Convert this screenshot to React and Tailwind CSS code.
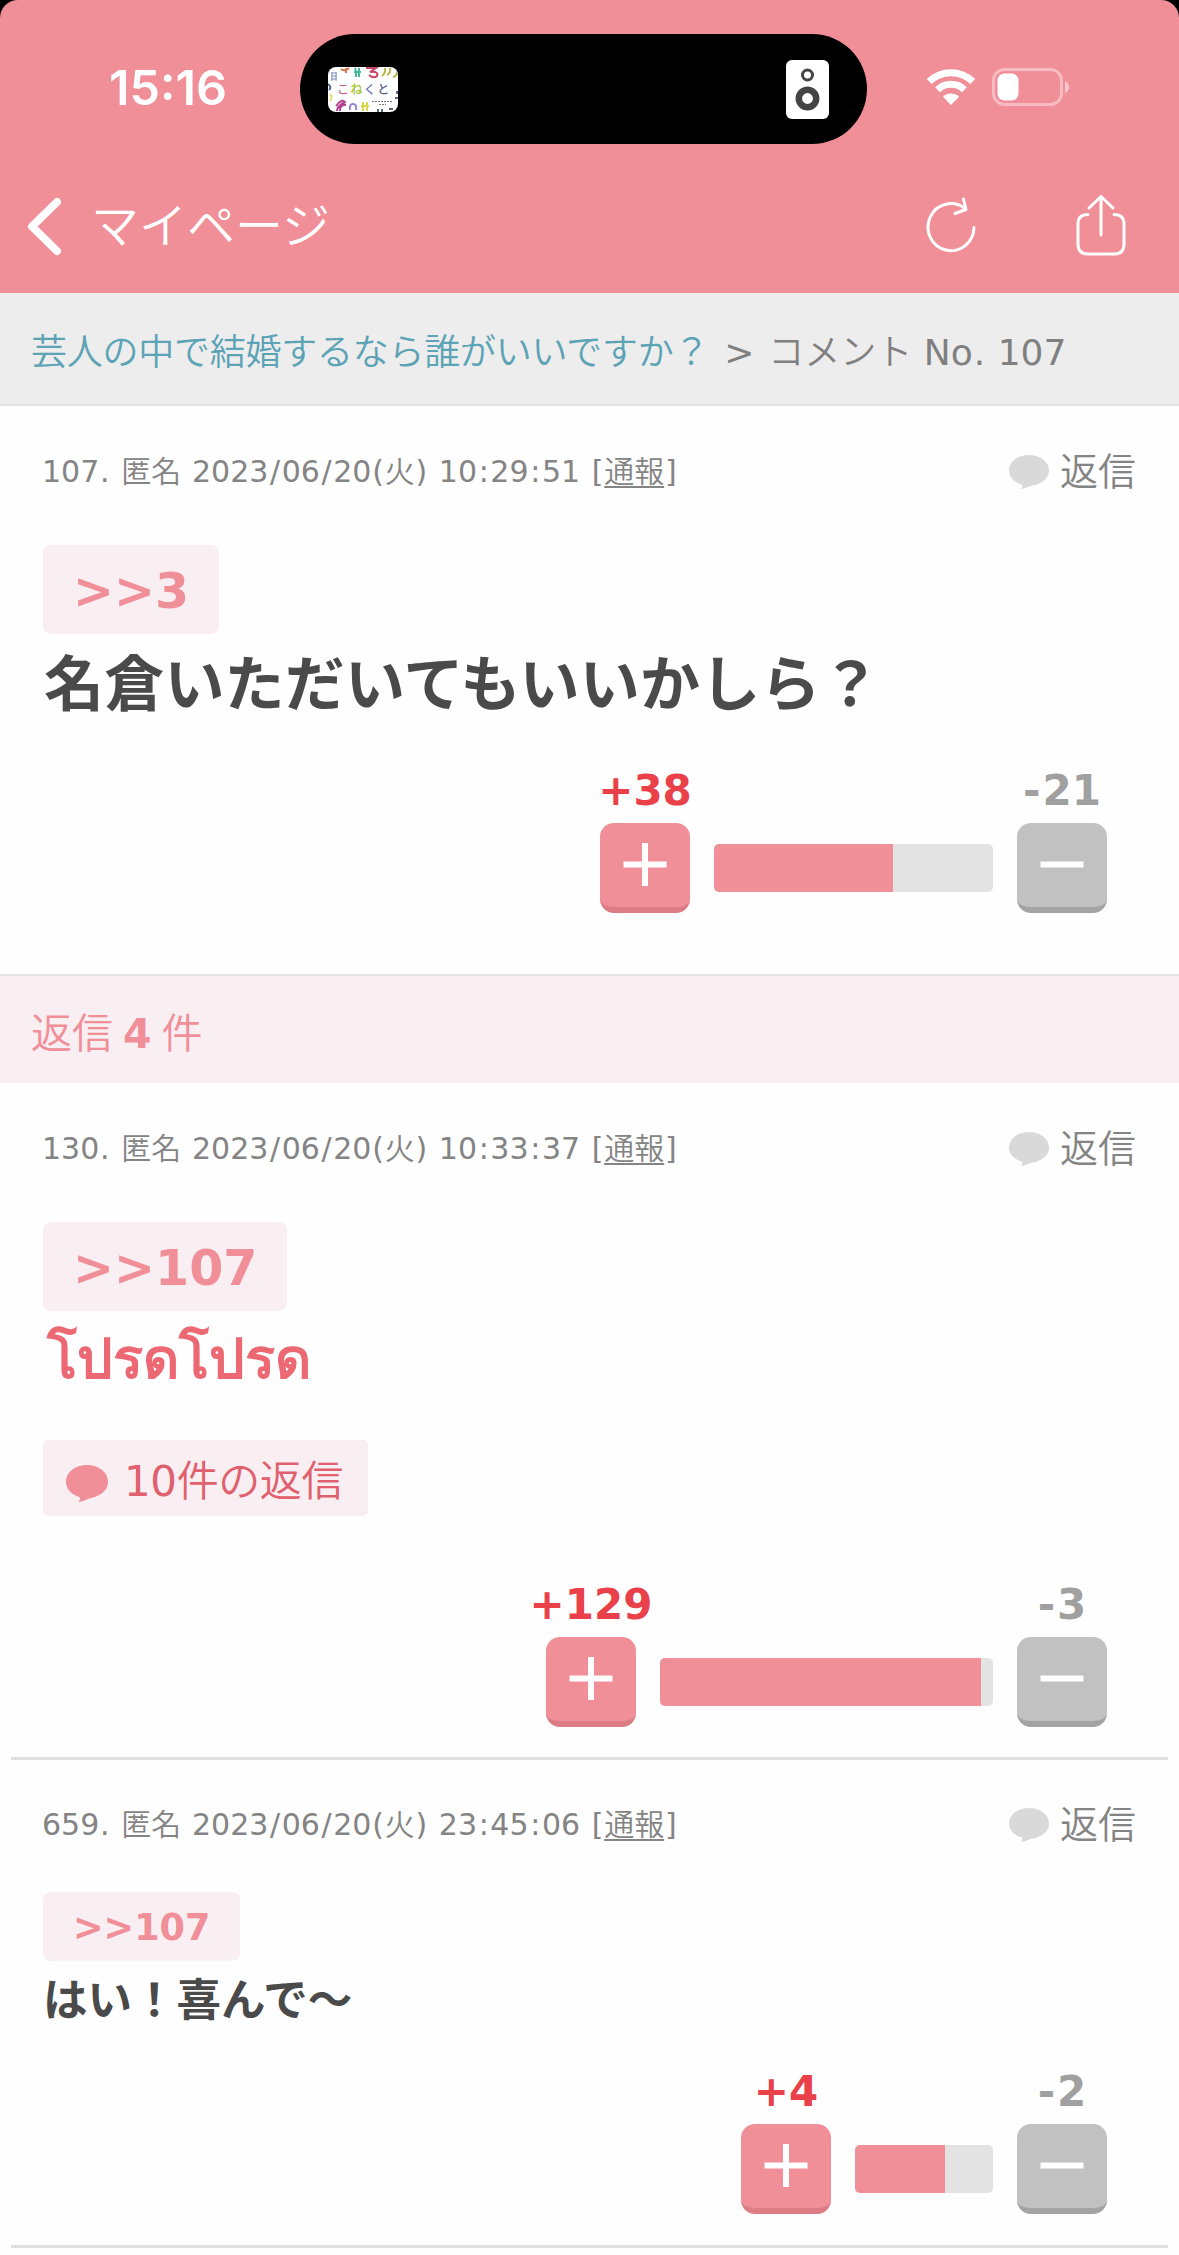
const comments = [
  {
    id: 107,
    date: '2023/06/20(火) 10:29:51',
    anchor: '>>3',
    body: '名倉いただいてもいいかしら？',
    plus: 38,
    minus: 21,
    height: 'h-[568px] pb-[61px]',
    meta: 'h-[132px]',
    chip: 'mt-[7px] h-[89px] pt-[5px] text-[49px]',
    text: 'pl-[1px] pt-[4px] text-[60px] leading-[94px] tracking-[0.2px] text-[#4a4a4a]',
    bar: 'w-[279px]',
    fill: 64,
  },
  {
    id: 130,
    date: '2023/06/20(火) 10:33:37',
    anchor: '>>107',
    body: 'โปรดโปรด',
    plus: 129,
    minus: 3,
    replies: 10,
    height: 'h-[674px] pb-[30px]',
    meta: 'h-[132px]',
    chip: 'mt-[7px] h-[89px] pt-[5px] text-[49px]',
    text: 'pl-[4px] pt-[1px] text-[56px] leading-[94px] text-[#ec6872]',
    bar: 'w-[333px]',
    fill: 96.5,
  },
  {
    id: 659,
    date: '2023/06/20(火) 23:45:06',
    anchor: '>>107',
    body: 'はい！喜んで〜',
    plus: 4,
    minus: 2,
    height: 'h-[485px] pb-[31px]',
    meta: 'h-[130px]',
    chip: 'mt-[2px] h-[69px] pt-[3px] text-[36.500px]',
    text: 'pt-[2px] text-[44.500px] leading-[76px] text-[#4a4a4a]',
    bar: 'w-[138px]',
    fill: 65.5,
  },
]

function Bubble({ className }) {
  return (
    <svg viewBox="0 0 40 34" className={className} fill="currentColor" preserveAspectRatio="none">
      <path d="M20 0C31 0 40 6.500 40 15.500S31 29.500 22 30.800C18 32.500 15.500 33.500 12 34C13.200 32.500 13.500 31 13.200 29.600C5.500 27.600 0 22.300 0 15.500C0 6.500 9 0 20 0Z" />
    </svg>
  )
}

// Latin runs stay at normal weight, separators get a wider set
function Stamp({ text }) {
  return text.split(/([/:().[\]]|[0-9A-Za-z]+)/).map((part, i) =>
    /^[/:]$/.test(part) ? (
      <span key={i} className="px-[0.054em] font-normal">{part}</span>
    ) : /^[().[\]]$/.test(part) ? (
      <span key={i} className="px-[0.028em] font-normal">{part}</span>
    ) : /^[0-9A-Za-z]+$/.test(part) ? (
      <span key={i} className="font-normal">{part}</span>
    ) : (
      part
    )
  )
}

function StatusBar() {
  return (
    <div className="flex h-[144px] items-start pt-[34px] text-white">
      <div className="w-[300px] pl-[109px] pt-[26px] font-['Inter'] text-[48.500px] font-semibold leading-[56px]">
        15:16
      </div>
      <div className="flex h-[110px] w-[567px] items-center justify-between rounded-full bg-black pl-[28px] pr-[38px]">
        <svg width="70" height="45" viewBox="0 0 70 45" className="rounded-[8px] bg-white" fill="none" strokeWidth="2">
          <path d="M3 6h6M3 9h6M3 12h6M4 5v9M8 5v9" stroke="#7d8cc0" strokeWidth="1" />
          <path d="M13 2q4 3 8-1M18 1v5" stroke="#d07a52" />
          <path d="M27 1q2 4 1 9M31 1v9M26 5h7" stroke="#48b99a" />
          <path d="M38 1h10l-6 4q9-1 7 4q-3 3-8-1" stroke="#c64468" />
          <path d="M54 9q4-3 3-8M59 8q4-2 3-7M65 10q4-1 4-5" stroke="#b8b84a" />
          <path d="M0 17q4 3 1 6M69 24v3M67 31h3" stroke="#52678e" />
          <path d="M2 27q3 3 0 7" stroke="#e6dd77" />
          <path d="M8 39q6-8 9-4q-8 4-8 9M12 44q0-7 6-6" stroke="#b14290" />
          <path d="M22 43q-1-6 3-6t3 6" stroke="#9487c9" />
          <path d="M35 35v9M39 35v9M33 39h8" stroke="#dcd84b" />
          <path d="M50 42v3M54 42v3M61 42h4" stroke="#5a6a70" />
          <path d="M44 34.500h20M51 37.500h7" stroke="#777" strokeWidth="1" strokeDasharray="2 1" />
          <text x="9" y="27" fontSize="12" letterSpacing="1.400" fontWeight="500" fontFamily="'Noto Sans CJK JP', sans-serif">
            <tspan fill="#bd6689">こ</tspan>
            <tspan fill="#a5c52b">ね</tspan>
            <tspan fill="#6f70bb">く</tspan>
            <tspan fill="#586081">と</tspan>
          </text>
        </svg>
        <svg width="43" height="59" viewBox="0 0 43 59">
          <rect width="43" height="59" rx="6" fill="#fff" />
          <circle cx="21.500" cy="15" r="5" fill="none" stroke="#444" strokeWidth="3" />
          <circle cx="21.500" cy="38.500" r="8.700" fill="none" stroke="#444" strokeWidth="6.500" />
        </svg>
      </div>
      <svg width="48" height="36" viewBox="0 0 48 36" className="ml-[60px] mt-[35px]" fill="none" stroke="#fff" strokeWidth="7">
        <path d="M2.300 12.500a31 31 0 0 1 43.400 0" />
        <path d="M10.500 20.700a19.500 19.500 0 0 1 27 0" />
        <path d="M24 36l-8-8.300a11.500 11.500 0 0 1 16 0z" fill="#fff" stroke="none" />
      </svg>
      <svg width="80" height="38" viewBox="0 0 80 38" className="ml-[17px] mt-[34px]">
        <rect x="1.500" y="1.500" width="68" height="35" rx="11" fill="none" stroke="#fff" strokeOpacity="0.4" strokeWidth="3" />
        <rect x="5.500" y="5.500" width="21" height="27" rx="7" fill="#fff" />
        <path d="M73 13q4 2 4 6t-4 6z" fill="#fff" fillOpacity="0.5" />
      </svg>
    </div>
  )
}

function NavBar() {
  return (
    <div className="flex h-[149px] items-center pt-[15px] text-white">
      <svg width="40" height="66" viewBox="0 0 40 66" className="ml-[24px]" fill="none" stroke="#fff" strokeWidth="8" strokeLinecap="round" strokeLinejoin="round">
        <path d="M33 9L8 33.500L33 58" />
      </svg>
      <div className="ml-[27px] text-[48px] font-[350] leading-none">マイページ</div>
      <svg width="54" height="66" viewBox="0 0 54 66" className="ml-auto" fill="none" stroke="#fff" strokeWidth="3" strokeLinecap="round" strokeLinejoin="round">
        <path d="M50 34.500A23 23.500 0 1 1 41 15.500" />
        <path d="M39.500 6L42 16.500L31 20.500" />
      </svg>
      <svg width="54" height="66" viewBox="0 0 54 66" className="ml-[95px] mr-[52px]" fill="none" stroke="#fff" strokeWidth="3" strokeLinecap="round" strokeLinejoin="round">
        <path d="M15 21.500Q5 21.500 5 31V51Q5 61 15 61H41Q51 61 51 51V31Q51 21.500 41 21.500" />
        <path d="M28 42V4M16 15L28 3.500L40 15" />
      </svg>
    </div>
  )
}

function Votes({ plus, minus, bar, fill }) {
  return (
    <div className="mr-[29px] mt-auto flex items-end justify-end gap-[24px]">
      <div className="flex w-[90px] flex-col items-center gap-[12px]">
        <span className="text-[42px] font-bold leading-[40px] text-[#e9404a]">+{plus}</span>
        <button className="flex h-[90px] w-[90px] items-center justify-center rounded-[14px] border-b-[6px] border-[#dc7d86] bg-[#f08f98]">
          <svg width="44" height="44" viewBox="0 0 44 44" stroke="#fff" strokeWidth="6">
            <path d="M22 0V43M0.500 21.500H43.500" />
          </svg>
        </button>
      </div>
      <div className={`mb-[21px] h-[48px] overflow-hidden rounded-[5px] bg-[#e3e3e3] ${bar}`}>
        <div className="h-full bg-[#f08f98]" style={{ width: `${fill}%` }} />
      </div>
      <div className="flex w-[90px] flex-col items-center gap-[12px]">
        <span className="text-[42px] font-bold leading-[40px] text-[#a0a0a0]">
          <span className="pr-[2px]">-</span>{minus}
        </span>
        <button className="flex h-[90px] w-[90px] items-center justify-center rounded-[14px] border-b-[6px] border-[#a3a3a3] bg-[#c1c1c1]">
          <svg width="44" height="44" viewBox="0 0 44 44" stroke="#fff" strokeWidth="6">
            <path d="M0.500 21.500H43.500" />
          </svg>
        </button>
      </div>
    </div>
  )
}

function Comment({ comment }) {
  return (
    <article className={`flex flex-col px-[43px] ${comment.height}`}>
      <div className={`flex shrink-0 items-center justify-between font-[350] text-[#848484] ${comment.meta}`}>
        <p className="-ml-px whitespace-nowrap pb-[2px] text-[30px] [word-spacing:1.2px]">
          <Stamp text={`${comment.id}. 匿名 ${comment.date} [`} />
          <span className="underline decoration-2 underline-offset-[4px]">通報</span>
          <Stamp text="]" />
        </p>
        <div className="flex items-center gap-[11px] text-[38px]">
          <Bubble className="h-[34px] w-[40px] text-[#d9d9d9]" />
          返信
        </div>
      </div>

      <div className={`flex shrink-0 items-center self-start rounded-[8px] bg-[#f9eef2] px-[30px] font-bold text-[#f08f98] ${comment.chip}`}>
        {comment.anchor}
      </div>
      <p className={`font-bold ${comment.text}`}>{comment.body}</p>

      {comment.replies && (
        <div className="mt-[34px] flex h-[76px] w-[325px] shrink-0 items-center self-start rounded-[5px] bg-[#f9eef2] pl-[23px] pt-[6px] text-[42px] font-[350] text-[#e0606e]">
          <Bubble className="mr-[16px] mt-[4px] h-[37px] w-[42px] text-[#f08f98]" />
          <span className="whitespace-nowrap tracking-[-0.4px]">
            <Stamp text={`${comment.replies}件の返信`} />
          </span>
        </div>
      )}

      <Votes plus={comment.plus} minus={comment.minus} bar={comment.bar} fill={comment.fill} />
    </article>
  )
}

export default function App() {
  const [root, ...replies] = comments

  return (
    <div lang="ja" className="h-[2255px] w-[1179px] overflow-hidden bg-black font-['DejaVu_Sans','Noto_Sans_CJK_JP',sans-serif]">
      <header className="h-[293px] rounded-t-[18px] bg-[#f08f98]">
        <StatusBar />
        <NavBar />
      </header>

      <main className="h-[1962px] bg-[#fefefe]">
        <nav className="flex h-[113px] items-center whitespace-nowrap border-b-2 border-[#e2e2e2] bg-[#ededed] pl-[31px] pt-[8px] text-[36px] font-[350] text-[#808080]">
          <a className="tracking-[-0.25px] text-[#5ba3b5]">芸人の中で結婚するなら誰がいいですか？</a>
          <span className="ml-[15px] font-normal">&gt;</span>
          <span className="ml-[14px]">
            コメント <Stamp text="No. 107" />
          </span>
        </nav>

        <Comment comment={root} />

        {/* Reply count */}
        <h2 className="flex h-[109px] items-center border-t-2 border-[#e3e3e3] bg-[#f9eef2] pl-[31px] pt-[10px] text-[41px] font-[350] text-[#f08f98]">
          返信<b className="mx-[10px] font-bold">4</b>件
        </h2>

        {replies.map((comment) => (
          <div key={comment.id}>
            <Comment comment={comment} />
            <hr className="mx-[11px] border-t-[3px] border-[#e0e0e0]" />
          </div>
        ))}
      </main>
    </div>
  )
}
